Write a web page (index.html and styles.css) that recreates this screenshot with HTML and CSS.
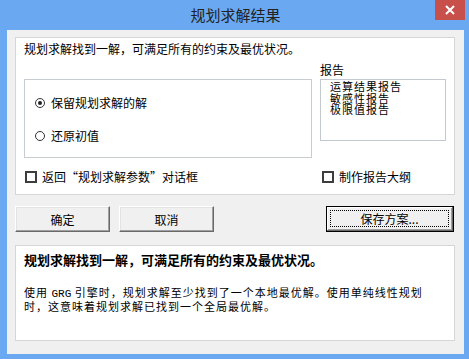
FILE: index.html
```html
<!DOCTYPE html>
<html lang="zh-CN">
<head>
<meta charset="utf-8">
<title>规划求解结果</title>
<link rel="stylesheet" href="styles.css">
</head>
<body>
<div class="window">
  <div class="titlebar">
    <span class="title">规划求解结果</span>
    <div class="close" aria-label="关闭">
      <svg width="10" height="10" viewBox="0 0 10 10"><path d="M1 1L9 9M9 1L1 9" stroke="#fff" stroke-width="2"/></svg>
    </div>
  </div>
  <div class="client">
    <div class="panel top-panel">
      <div class="intro">规划求解找到一解，可满足所有的约束及最优状况。</div>
      <div class="top-grid">
        <div class="group">
          <label class="radio-row"><span class="radio checked"></span>保留规划求解的解</label>
          <label class="radio-row second"><span class="radio"></span>还原初值</label>
        </div>
        <div class="report-col">
          <div class="report-label">报告</div>
          <ul class="listbox">
            <li>运算结果报告</li>
            <li>敏感性报告</li>
            <li>极限值报告</li>
          </ul>
        </div>
        <label class="check-row left-check"><span class="checkbox"></span>返回“规划求解参数”对话框</label>
        <label class="check-row right-check"><span class="checkbox"></span>制作报告大纲</label>
      </div>
    </div>
    <div class="button-row">
      <button class="btn">确定</button>
      <button class="btn cancel">取消</button>
      <button class="btn default"><span class="focus">保存方案...</span></button>
    </div>
    <div class="panel bottom-panel">
      <div class="headline">规划求解找到一解，可满足所有的约束及最优状况。</div>
      <p class="desc">使用 <span class="mono">GRG</span> 引擎时，规划求解至少找到了一个本地最优解。使用单纯线性规划<br>时，这意味着规划求解已找到一个全局最优解。</p>
    </div>
  </div>
</div>
</body>
</html>
```

FILE: styles.css
```css
* { box-sizing: border-box; }
html, body { margin: 0; padding: 0; }
body {
  font-family: "Noto Sans CJK SC", "Noto Sans", sans-serif;
  font-size: 12px;
  color: #000;
  background: #6aa9f1;
}
.window {
  width: 469px;
  height: 359px;
  background: #6aa9f1;
  display: flex;
  flex-direction: column;
}
.titlebar {
  height: 30px;
  display: grid;
  grid-template-columns: 1fr auto 1fr;
  align-items: start;
}
.title {
  grid-column: 2;
  font-size: 15px;
  line-height: 30px;
  color: #222;
  padding-left: 2px;
}
.close {
  grid-column: 3;
  justify-self: end;
  margin-right: 4px;
  width: 30px;
  height: 20px;
  background: #c7504b;
  display: flex;
  align-items: center;
  justify-content: center;
}
.client {
  flex: 1;
  margin: 0 5px 5px 7px;
  background: #f0f0f0;
  padding: 7px 9px 13px 8px;
  display: flex;
  flex-direction: column;
}
.panel {
  background: #fff;
  border: 1px solid #d6d6d6;
}
.top-panel {
  height: 158px;
  padding: 3px 0 0 8px;
}
.intro {
  line-height: 16px;
  height: 16px;
}
.top-grid {
  display: grid;
  grid-template-columns: 288px 126px;
  column-gap: 8px;
}
.group {
  grid-column: 1;
  grid-row: 1;
  margin-top: 22px;
  height: 79px;
  border: 1px solid #c8ccd3;
  padding: 15px 0 0 10px;
  display: flex;
  flex-direction: column;
}
.radio-row {
  display: flex;
  align-items: center;
  line-height: 16px;
  height: 16px;
}
.radio-row.second { margin-top: 17px; }
.radio {
  width: 10px;
  height: 10px;
  border: 1.6px solid #333;
  border-radius: 50%;
  margin-right: 6px;
  display: flex;
  align-items: center;
  justify-content: center;
}
.radio.checked::after {
  content: "";
  width: 4px;
  height: 4px;
  border-radius: 50%;
  background: #222;
}
.report-col {
  grid-column: 2;
  grid-row: 1;
  margin-top: 5px;
}
.report-label {
  line-height: 16px;
  height: 16px;
}
.listbox {
  list-style: none;
  margin: 1px 0 0 0;
  padding: 1px 0 0 9px;
  height: 62px;
  border: 1px solid #c3c8d0;
  font-size: 11px;
  letter-spacing: 1px;
}
.listbox li {
  line-height: 11.5px;
  height: 11.5px;
}
.check-row {
  grid-row: 2;
  margin-top: 11px;
  display: flex;
  align-items: center;
  line-height: 16px;
  height: 16px;
}
.left-check { grid-column: 1; padding-left: 1px; }
.right-check { grid-column: 2; padding-left: 2px; }
.checkbox {
  width: 12px;
  height: 12px;
  border: 2px solid #3d3d3d;
  background: #fff;
  margin-right: 5px;
}
.button-row {
  margin-top: 11px;
  height: 26px;
  display: flex;
}
.btn {
  font-family: inherit;
  font-size: 12px;
  color: #000;
  width: 95px;
  height: 26px;
  padding: 0;
  background: #f0f0f0;
  border: 1px solid;
  border-color: #fff #696969 #696969 #fff;
  box-shadow: inset -1px -1px #a0a0a0, inset 1px 1px #e3e3e3;
}
.btn.cancel { margin-left: 9px; }
.btn.default {
  margin-left: auto;
  margin-right: 1px;
  width: 128px;
  border: 1px solid #000;
  box-shadow: inset -1px -1px #696969, inset 1px 1px #fff, inset -2px -2px #a0a0a0;
  padding: 3px 4px 4px 3px;
  display: flex;
}
.focus {
  flex: 1;
  border: 1px dotted #000;
  display: flex;
  align-items: center;
  justify-content: center;
}
.bottom-panel {
  margin-top: 13px;
  height: 96px;
  padding: 6px 0 0 8px;
}
.headline {
  font-weight: bold;
  font-size: 13px;
  line-height: 16px;
  height: 16px;
}
.desc {
  margin: 19px 0 0 0;
  font-size: 11px;
  letter-spacing: 1px;
  line-height: 11.5px;
}
.mono {
  font-family: "Liberation Mono", monospace;
  font-size: 11px;
  letter-spacing: 0;
}
```
